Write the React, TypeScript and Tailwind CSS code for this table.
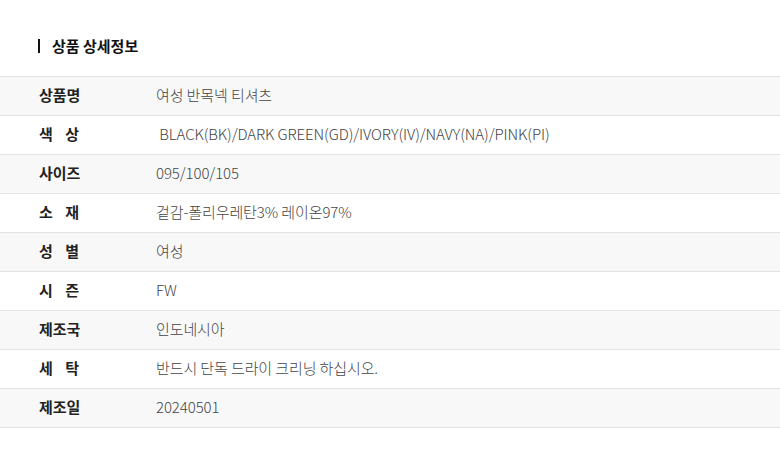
import React from 'react'

const rows: [string, string][] = [
  ['상품명', '여성 반목넥 티셔츠'],
  ['색상', ' BLACK(BK)/DARK GREEN(GD)/IVORY(IV)/NAVY(NA)/PINK(PI)'],
  ['사이즈', '095/100/105'],
  ['소재', '겉감-폴리우레탄3% 레이온97%'],
  ['성별', '여성'],
  ['시즌', 'FW'],
  ['제조국', '인도네시아'],
  ['세탁', '반드시 단독 드라이 크리닝 하십시오.'],
  ['제조일', '20240501'],
]

const Label = ({ text }: { text: string }) => {
  if (text.length === 2) {
    return (
      <span className="flex w-[40px] justify-between">
        <span>{text[0]}</span>
        <span>{text[1]}</span>
      </span>
    )
  }
  return <span>{text}</span>
}

const App = () => {
  return (
    <div className="w-[780px] h-[466px] bg-white pt-[36px] font-['Noto_Sans_CJK_KR','Noto_Sans',sans-serif]">
      <h2 className="flex items-center pl-[38px] text-[15px] font-bold text-[#111] leading-[20px]">
        <span className="w-[2px] h-[14px] bg-[#111] mr-[12px]" />
        상품 상세정보
      </h2>
      <div className="mt-[20px] border-t border-[#e3e3e3]">
        {rows.map(([k, v], i) => (
          <div
            key={k}
            className={`flex items-center h-[39px] border-b border-[#e3e3e3] ${i % 2 === 0 ? 'bg-[#f8f8f8]' : 'bg-white'}`}
          >
            <div className="w-[156px] pl-[39px] text-[15px] font-bold text-[#222] -mt-[1px]">
              <Label text={k} />
            </div>
            <div className="text-[15px] font-light text-[#444] whitespace-pre tracking-[-0.1px] -mt-[1px]">{v}</div>
          </div>
        ))}
      </div>
    </div>
  )
}

export default App
